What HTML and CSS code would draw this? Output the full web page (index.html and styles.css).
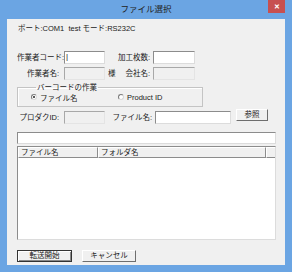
FILE: index.html
```html
<!DOCTYPE html>
<html lang="ja">
<head>
    <meta charset="UTF-8">
    <title>ファイル選択</title>
    <link rel="stylesheet" href="styles.css">
</head>
<body>
    <div class="window">
        <div class="titlebar">
            <span></span>
            <span class="title">ファイル選択</span>
            <span class="close">✕</span>
        </div>
        <div class="client">
            <div class="port">ポート:COM1&nbsp;&nbsp;test モード:RS232C</div>

            <div class="row row-first">
                <span class="lbl">作業者コード:</span>
                <span class="edit w41 focused">|</span>
                <span class="lbl2">加工枚数:</span>
                <span class="edit w42"></span>
            </div>
            <div class="row">
                <span class="lbl">作業者名:</span>
                <span class="edit w41 disabled"></span>
                <span class="lbl2 split"><span>様</span><span>会社名:</span></span>
                <span class="edit w42 disabled"></span>
            </div>

            <fieldset class="group">
                <legend>バーコードの作業</legend>
                <div class="radios">
                    <span class="radio-item first"><span class="radio checked"></span>ファイル名</span>
                    <span class="radio-item"><span class="radio"></span>Product ID</span>
                </div>
            </fieldset>

            <div class="row row-prod">
                <span class="lbl">プロダクID:</span>
                <span class="edit w41 disabled"></span>
                <span class="lbl3">ファイル名:</span>
                <span class="edit w76"></span>
                <span class="btn btn-ref">参照</span>
            </div>

            <div class="edit long"></div>

            <div class="listview">
                <div class="lv-head">
                    <span class="col c1">ファイル名</span>
                    <span class="col c2">フォルダ名</span>
                    <span class="col c3"></span>
                </div>
            </div>

            <div class="buttons">
                <span class="btn btn-default">転送開始</span>
                <span class="btn btn-cancel">キャンセル</span>
            </div>
        </div>
    </div>
</body>
</html>
```

FILE: styles.css
```css
* {
    box-sizing: border-box;
}
body {
    margin: 0;
    font-family: "Liberation Sans", "Noto Sans CJK JP", sans-serif;
    font-size: 7.5px;
    color: #1a1a1a;
}
.window {
    width: 292px;
    height: 272px;
    background: #6ba5e3;
    padding: 0 7px 7px 7px;
    display: flex;
    flex-direction: column;
}
.titlebar {
    height: 19px;
    display: grid;
    grid-template-columns: 1fr auto 1fr;
    align-items: start;
}
.title {
    font-size: 8.5px;
    line-height: 19px;
    color: #222;
}
.close {
    justify-self: end;
    width: 17px;
    height: 13px;
    background: #c75050;
    color: #fff;
    font-size: 7px;
    line-height: 13px;
    text-align: center;
    font-weight: bold;
}
.client {
    flex: 1;
    background: #f0f0f0;
    padding: 5px 9px 0 10px;
}
.port {
    margin-left: 1px;
    line-height: 10px;
}
.row {
    display: flex;
    align-items: center;
    height: 13px;
    margin-top: 3px;
}
.row-first {
    margin-top: 17px;
}
.row-prod {
    margin-top: 4px;
    align-items: flex-start;
}
.lbl {
    width: 47px;
    text-align: right;
    padding-right: 5px;
    line-height: 13px;
    white-space: nowrap;
}
.lbl2 {
    width: 48px;
    text-align: right;
    padding-right: 3px;
    line-height: 13px;
}
.lbl2.split {
    display: flex;
    justify-content: space-between;
    padding-left: 3px;
}
.lbl3 {
    width: 50px;
    text-align: right;
    padding-right: 3px;
    line-height: 13px;
}
.edit {
    display: block;
    height: 13px;
    background: #fff;
    border: 1px solid;
    border-color: #8c8c8c #dcdcdc #dcdcdc #8c8c8c;
    line-height: 10px;
    padding-left: 1px;
}
.edit.disabled {
    background: #f0f0f0;
    border-color: #a8a8a8 #e4e4e4 #e4e4e4 #a8a8a8;
}
.focused {
    font-size: 8px;
}
.w41 { width: 41px; }
.w42 { width: 42px; }
.w76 { width: 76px; }
.long {
    width: 259px;
    height: 12px;
    margin-top: 8px;
}
.group {
    margin: 3px 0 0 0;
    padding: 0 0 4px 13px;
    width: 186px;
    border: 1px solid #c4c4c4;
    box-shadow: inset 1px 1px 0 #fff;
}
.group legend {
    margin-left: 5px;
    padding: 0 1px;
    line-height: 9px;
}
.radios {
    display: flex;
    align-items: center;
    height: 10px;
}
.radio-item {
    display: flex;
    align-items: center;
    gap: 3px;
}
.radio-item.first {
    width: 87px;
}
.radio {
    width: 6px;
    height: 6px;
    border-radius: 50%;
    background: #fff;
    border: 1px solid;
    border-color: #7a7a7a #d8d8d8 #d8d8d8 #7a7a7a;
    position: relative;
}
.radio.checked::after {
    content: "";
    position: absolute;
    left: 1px;
    top: 1px;
    width: 2px;
    height: 2px;
    border-radius: 50%;
    background: #222;
}
.btn {
    display: block;
    height: 12px;
    background: #f0f0f0;
    border: 1px solid;
    border-color: #fff #6e6e6e #6e6e6e #fff;
    text-align: center;
    line-height: 10px;
}
.btn-ref {
    width: 32px;
    margin-left: 5px;
    margin-top: -2px;
}
.listview {
    margin-top: 2px;
    width: 259px;
    height: 94px;
    background: #fff;
    border: 1px solid;
    border-color: #8c8c8c #dcdcdc #dcdcdc #8c8c8c;
}
.lv-head {
    display: flex;
    height: 11px;
}
.col {
    display: block;
    height: 11px;
    background: #f0f0f0;
    border: 1px solid;
    border-color: #fff #8c8c8c #8c8c8c #fff;
    line-height: 9px;
    padding-left: 2px;
}
.c1 { width: 80px; }
.c2 { width: 168px; }
.c3 { flex: 1; border-right: none; }
.buttons {
    display: flex;
    margin-top: 10px;
    gap: 10px;
}
.btn-default {
    width: 55px;
    border-color: #333;
    box-shadow: inset 1px 1px 0 #fff, inset -1px -1px 0 #888;
}
.btn-cancel {
    width: 54px;
}
```
